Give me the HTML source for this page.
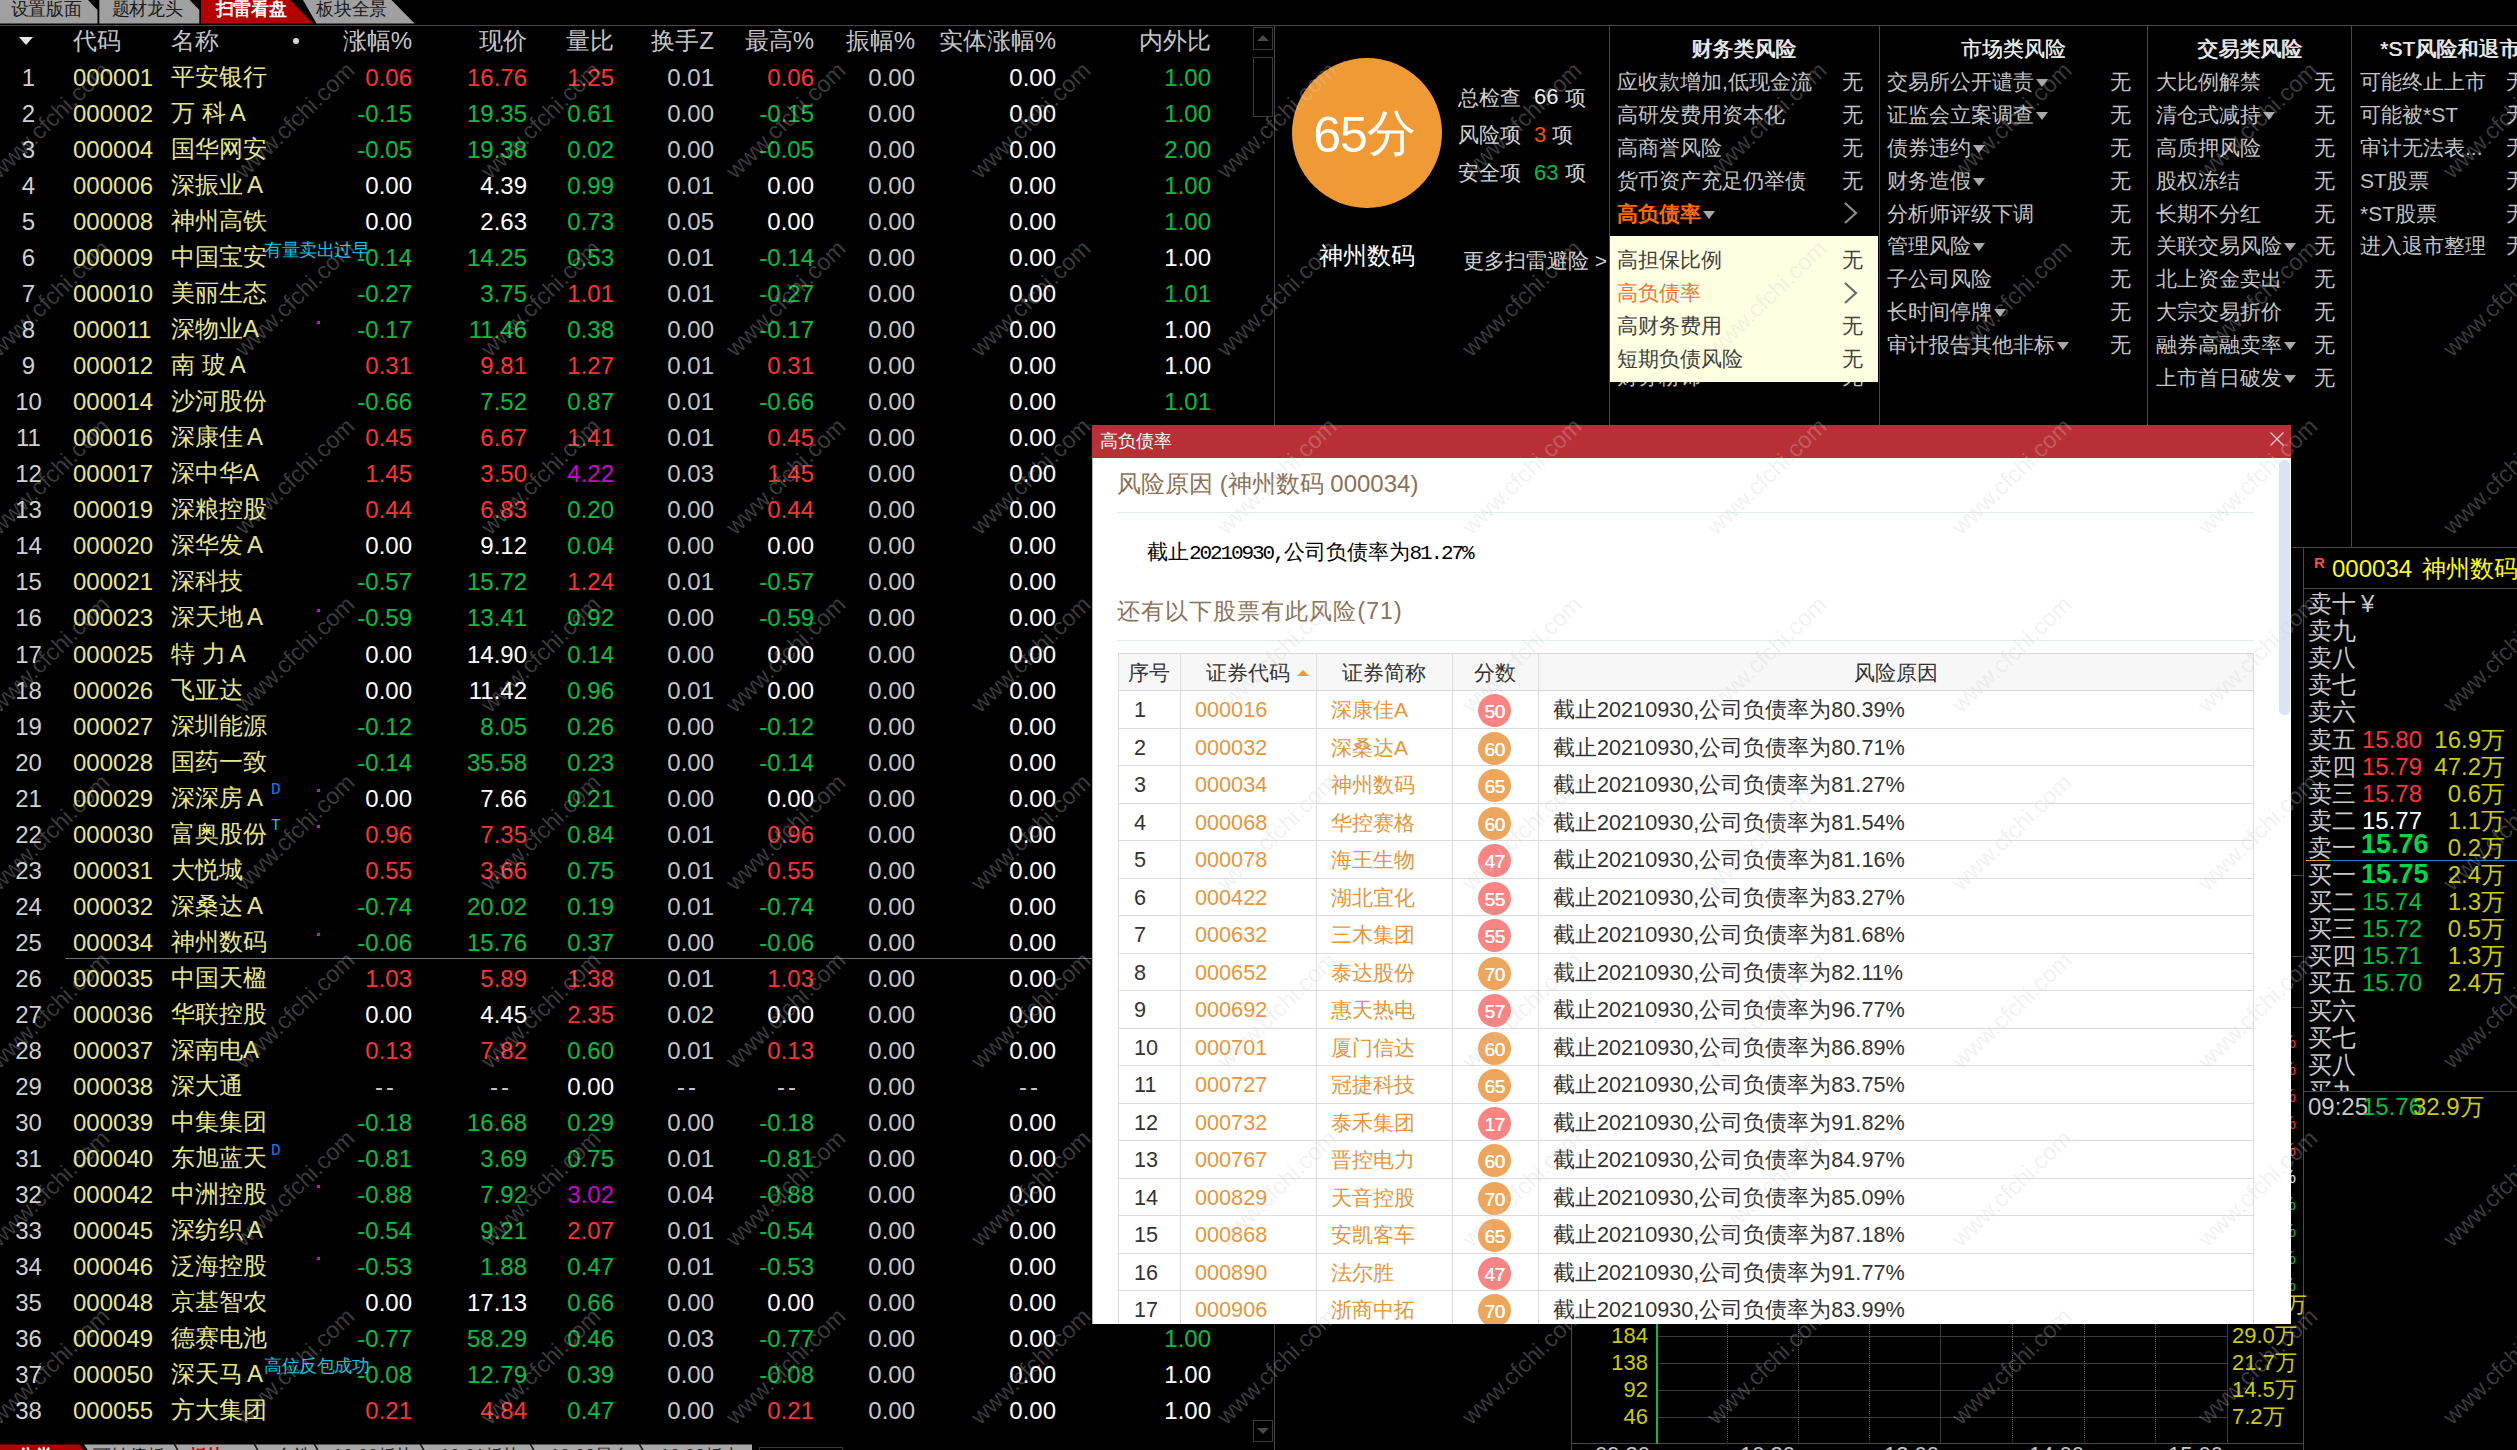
<!DOCTYPE html><html lang="zh"><head><meta charset="utf-8"><title>scan</title><style>
html,body{margin:0;padding:0;background:#000;}
body{width:2517px;height:1450px;overflow:hidden;position:relative;font-family:"Liberation Sans",sans-serif;}
.t{position:absolute;white-space:nowrap;}
.b{position:absolute;}
.row{position:absolute;left:0;width:1250px;height:30px;line-height:30px;font-size:24px;}
.row span{position:absolute;top:0;white-space:nowrap;}
.ix{left:0;width:57px;text-align:center;color:#d0d0d0;}
.cd{left:73px;color:#e6e68c;}
.nm{left:171px;color:#e6e68c;top:-1px !important;}
.c0{right:838px}.c1{right:723px}.c2{right:636px}.c3{right:536px}.c4{right:436px}.c5{right:335px}.c6{right:194px}.c7{right:39px}
.r{color:#ff3232}.g{color:#00c040}.w{color:#fff}.m{color:#d000d0}.x{color:#c8c8c8}
.dot{position:absolute;left:317px;top:5.5px;width:3px;height:3px;background:#e000e0;}
.rk{position:absolute;height:30px;line-height:30px;font-size:21px;color:#c4c4c4;white-space:nowrap;}
.rk i{display:inline-block;width:0;height:0;border-left:6px solid transparent;border-right:6px solid transparent;border-top:8px solid #a8a8a8;margin-left:2px;position:relative;top:-2px;}
.ob{position:absolute;left:2308px;width:209px;height:28px;line-height:28px;font-size:24px;color:#c8c8c8;white-space:nowrap;}
.ob span{position:absolute;top:0;}
.dr{position:absolute;left:1118px;width:1136px;height:37.5px;line-height:38px;font-size:21.65px;color:#333;box-sizing:border-box;border-bottom:1px solid #dcdcdc;}
.dr span{position:absolute;top:0;white-space:nowrap;}
.dr .o{color:#e8953a;}
.sc{position:absolute;left:360px;top:3px;width:33px;height:33px;border-radius:50%;color:#fff;font-size:19px;line-height:35px;text-align:center;letter-spacing:-0.5px;text-shadow:0.4px 0 0 #fff;}
.wm{position:absolute;white-space:nowrap;font-size:23.5px;color:rgba(210,210,210,0.285);transform-origin:0 100%;transform:rotate(-44deg);height:24px;line-height:24px;}
</style></head><body>
<svg class="b" style="left:0;top:0" width="420" height="24"><polygon points="0,0 88,0 97.5,10 97.5,23.6 0,23.6" fill="#a0a0a0"/></svg>
<svg class="b" style="left:0;top:0" width="420" height="24"><polygon points="99.3,0 189.7,0 199.3,10 199.3,23.6 99.3,23.6" fill="#a0a0a0"/></svg>
<svg class="b" style="left:0;top:0" width="420" height="24"><polygon points="303,0 391.6,0 414.6,23.6 316.5,23.6" fill="#a0a0a0"/></svg>
<svg class="b" style="left:0;top:0" width="420" height="24"><polygon points="201,0 290,0 313.3,23.6 201,23.6" fill="#b40000"/></svg>
<div class="t " style="top:-2.0px;height:22px;line-height:22px;color:#1a1a1a;font-size:18px;left:10.5px;letter-spacing:-0.2px;">设置版面</div>
<div class="t " style="top:-2.0px;height:22px;line-height:22px;color:#1a1a1a;font-size:18px;left:111.5px;letter-spacing:-0.2px;">题材龙头</div>
<div class="t " style="top:-2.0px;height:22px;line-height:22px;color:#ffffff;font-size:18px;left:215.5px;font-weight:bold;letter-spacing:-0.2px;">扫雷看盘</div>
<div class="t " style="top:-2.0px;height:22px;line-height:22px;color:#1a1a1a;font-size:18px;left:316px;letter-spacing:-0.2px;">板块全景</div>
<div class="b" style="left:0px;top:25px;width:2517px;height:1px;background:#484848;"></div>
<svg class="b" style="left:18px;top:36px" width="16" height="10"><path d="M1 1h14l-7 8z" fill="#e8e8e8"/></svg>
<div class="row" style="top:26px;color:#c4c4c4"><span style="left:73px">代码</span><span style="left:171px">名称</span><span class="c0">涨幅%</span><span class="c1">现价</span><span class="c2">量比</span><span class="c3">换手Z</span><span class="c4">最高%</span><span class="c5">振幅%</span><span class="c6">实体涨幅%</span><span class="c7">内外比</span></div>
<div class="b" style="left:292.5px;top:37.5px;width:6px;height:6px;background:#d8d8d8;border-radius:3px;"></div>
<div class="row" style="top:63.3px"><span class="ix">1</span><span class="cd">000001</span><span class="nm">平安银行</span><span class="c0 r">0.06</span><span class="c1 r">16.76</span><span class="c2 r">1.25</span><span class="c3 x">0.01</span><span class="c4 r">0.06</span><span class="c5 x">0.00</span><span class="c6 w">0.00</span><span class="c7 g">1.00</span></div>
<div class="row" style="top:99.3px"><span class="ix">2</span><span class="cd">000002</span><span class="nm">万&nbsp;科<span style="margin-left:4px">A</span></span><span class="c0 g">-0.15</span><span class="c1 g">19.35</span><span class="c2 g">0.61</span><span class="c3 x">0.00</span><span class="c4 g">-0.15</span><span class="c5 x">0.00</span><span class="c6 w">0.00</span><span class="c7 g">1.00</span></div>
<div class="row" style="top:135.3px"><span class="ix">3</span><span class="cd">000004</span><span class="nm">国华网安</span><span class="c0 g">-0.05</span><span class="c1 g">19.38</span><span class="c2 g">0.02</span><span class="c3 x">0.00</span><span class="c4 g">-0.05</span><span class="c5 x">0.00</span><span class="c6 w">0.00</span><span class="c7 g">2.00</span></div>
<div class="row" style="top:171.3px"><span class="ix">4</span><span class="cd">000006</span><span class="nm">深振业<span style="margin-left:4px">A</span></span><span class="c0 w">0.00</span><span class="c1 w">4.39</span><span class="c2 g">0.99</span><span class="c3 x">0.01</span><span class="c4 w">0.00</span><span class="c5 x">0.00</span><span class="c6 w">0.00</span><span class="c7 g">1.00</span></div>
<div class="row" style="top:207.3px"><span class="ix">5</span><span class="cd">000008</span><span class="nm">神州高铁</span><span class="c0 w">0.00</span><span class="c1 w">2.63</span><span class="c2 g">0.73</span><span class="c3 x">0.05</span><span class="c4 w">0.00</span><span class="c5 x">0.00</span><span class="c6 w">0.00</span><span class="c7 g">1.00</span></div>
<div class="row" style="top:243.3px"><span class="ix">6</span><span class="cd">000009</span><span class="nm">中国宝安</span><span class="c0 g">-0.14</span><span class="c1 g">14.25</span><span class="c2 g">0.53</span><span class="c3 x">0.01</span><span class="c4 g">-0.14</span><span class="c5 x">0.00</span><span class="c6 w">0.00</span><span class="c7 w">1.00</span></div>
<div class="row" style="top:279.4px"><span class="ix">7</span><span class="cd">000010</span><span class="nm">美丽生态</span><span class="c0 g">-0.27</span><span class="c1 g">3.75</span><span class="c2 r">1.01</span><span class="c3 x">0.01</span><span class="c4 g">-0.27</span><span class="c5 x">0.00</span><span class="c6 w">0.00</span><span class="c7 g">1.01</span></div>
<div class="row" style="top:315.4px"><span class="ix">8</span><span class="cd">000011</span><span class="nm">深物业A</span><span class="c0 g">-0.17</span><span class="c1 g">11.46</span><span class="c2 g">0.38</span><span class="c3 x">0.00</span><span class="c4 g">-0.17</span><span class="c5 x">0.00</span><span class="c6 w">0.00</span><span class="c7 w">1.00</span><div class="dot"></div></div>
<div class="row" style="top:351.4px"><span class="ix">9</span><span class="cd">000012</span><span class="nm">南&nbsp;玻<span style="margin-left:4px">A</span></span><span class="c0 r">0.31</span><span class="c1 r">9.81</span><span class="c2 r">1.27</span><span class="c3 x">0.01</span><span class="c4 r">0.31</span><span class="c5 x">0.00</span><span class="c6 w">0.00</span><span class="c7 w">1.00</span></div>
<div class="row" style="top:387.4px"><span class="ix">10</span><span class="cd">000014</span><span class="nm">沙河股份</span><span class="c0 g">-0.66</span><span class="c1 g">7.52</span><span class="c2 g">0.87</span><span class="c3 x">0.01</span><span class="c4 g">-0.66</span><span class="c5 x">0.00</span><span class="c6 w">0.00</span><span class="c7 g">1.01</span></div>
<div class="row" style="top:423.4px"><span class="ix">11</span><span class="cd">000016</span><span class="nm">深康佳<span style="margin-left:4px">A</span></span><span class="c0 r">0.45</span><span class="c1 r">6.67</span><span class="c2 r">1.41</span><span class="c3 x">0.01</span><span class="c4 r">0.45</span><span class="c5 x">0.00</span><span class="c6 w">0.00</span><span class="c7 w">1.00</span></div>
<div class="row" style="top:459.4px"><span class="ix">12</span><span class="cd">000017</span><span class="nm">深中华A</span><span class="c0 r">1.45</span><span class="c1 r">3.50</span><span class="c2 m">4.22</span><span class="c3 x">0.03</span><span class="c4 r">1.45</span><span class="c5 x">0.00</span><span class="c6 w">0.00</span><span class="c7 w">1.00</span></div>
<div class="row" style="top:495.4px"><span class="ix">13</span><span class="cd">000019</span><span class="nm">深粮控股</span><span class="c0 r">0.44</span><span class="c1 r">6.83</span><span class="c2 g">0.20</span><span class="c3 x">0.00</span><span class="c4 r">0.44</span><span class="c5 x">0.00</span><span class="c6 w">0.00</span><span class="c7 w">1.00</span></div>
<div class="row" style="top:531.4px"><span class="ix">14</span><span class="cd">000020</span><span class="nm">深华发<span style="margin-left:4px">A</span></span><span class="c0 w">0.00</span><span class="c1 w">9.12</span><span class="c2 g">0.04</span><span class="c3 x">0.00</span><span class="c4 w">0.00</span><span class="c5 x">0.00</span><span class="c6 w">0.00</span><span class="c7 w">1.00</span></div>
<div class="row" style="top:567.4px"><span class="ix">15</span><span class="cd">000021</span><span class="nm">深科技</span><span class="c0 g">-0.57</span><span class="c1 g">15.72</span><span class="c2 r">1.24</span><span class="c3 x">0.01</span><span class="c4 g">-0.57</span><span class="c5 x">0.00</span><span class="c6 w">0.00</span><span class="c7 w">1.00</span></div>
<div class="row" style="top:603.4px"><span class="ix">16</span><span class="cd">000023</span><span class="nm">深天地<span style="margin-left:4px">A</span></span><span class="c0 g">-0.59</span><span class="c1 g">13.41</span><span class="c2 g">0.92</span><span class="c3 x">0.00</span><span class="c4 g">-0.59</span><span class="c5 x">0.00</span><span class="c6 w">0.00</span><span class="c7 w">1.00</span><div class="dot"></div></div>
<div class="row" style="top:639.5px"><span class="ix">17</span><span class="cd">000025</span><span class="nm">特&nbsp;力<span style="margin-left:4px">A</span></span><span class="c0 w">0.00</span><span class="c1 w">14.90</span><span class="c2 g">0.14</span><span class="c3 x">0.00</span><span class="c4 w">0.00</span><span class="c5 x">0.00</span><span class="c6 w">0.00</span><span class="c7 w">1.00</span></div>
<div class="row" style="top:675.5px"><span class="ix">18</span><span class="cd">000026</span><span class="nm">飞亚达</span><span class="c0 w">0.00</span><span class="c1 w">11.42</span><span class="c2 g">0.96</span><span class="c3 x">0.01</span><span class="c4 w">0.00</span><span class="c5 x">0.00</span><span class="c6 w">0.00</span><span class="c7 w">1.00</span></div>
<div class="row" style="top:711.5px"><span class="ix">19</span><span class="cd">000027</span><span class="nm">深圳能源</span><span class="c0 g">-0.12</span><span class="c1 g">8.05</span><span class="c2 g">0.26</span><span class="c3 x">0.00</span><span class="c4 g">-0.12</span><span class="c5 x">0.00</span><span class="c6 w">0.00</span><span class="c7 w">1.00</span></div>
<div class="row" style="top:747.5px"><span class="ix">20</span><span class="cd">000028</span><span class="nm">国药一致</span><span class="c0 g">-0.14</span><span class="c1 g">35.58</span><span class="c2 g">0.23</span><span class="c3 x">0.00</span><span class="c4 g">-0.14</span><span class="c5 x">0.00</span><span class="c6 w">0.00</span><span class="c7 w">1.00</span></div>
<div class="row" style="top:783.5px"><span class="ix">21</span><span class="cd">000029</span><span class="nm">深深房<span style="margin-left:4px">A</span></span><span class="c0 w">0.00</span><span class="c1 w">7.66</span><span class="c2 g">0.21</span><span class="c3 x">0.00</span><span class="c4 w">0.00</span><span class="c5 x">0.00</span><span class="c6 w">0.00</span><span class="c7 w">1.00</span><div class="dot"></div></div>
<div class="row" style="top:819.5px"><span class="ix">22</span><span class="cd">000030</span><span class="nm">富奥股份</span><span class="c0 r">0.96</span><span class="c1 r">7.35</span><span class="c2 g">0.84</span><span class="c3 x">0.01</span><span class="c4 r">0.96</span><span class="c5 x">0.00</span><span class="c6 w">0.00</span><span class="c7 w">1.00</span><div class="dot"></div></div>
<div class="row" style="top:855.5px"><span class="ix">23</span><span class="cd">000031</span><span class="nm">大悦城</span><span class="c0 r">0.55</span><span class="c1 r">3.66</span><span class="c2 g">0.75</span><span class="c3 x">0.01</span><span class="c4 r">0.55</span><span class="c5 x">0.00</span><span class="c6 w">0.00</span><span class="c7 w">1.00</span></div>
<div class="row" style="top:891.5px"><span class="ix">24</span><span class="cd">000032</span><span class="nm">深桑达<span style="margin-left:4px">A</span></span><span class="c0 g">-0.74</span><span class="c1 g">20.02</span><span class="c2 g">0.19</span><span class="c3 x">0.01</span><span class="c4 g">-0.74</span><span class="c5 x">0.00</span><span class="c6 w">0.00</span><span class="c7 w">1.00</span></div>
<div class="row" style="top:927.5px"><span class="ix">25</span><span class="cd">000034</span><span class="nm">神州数码</span><span class="c0 g">-0.06</span><span class="c1 g">15.76</span><span class="c2 g">0.37</span><span class="c3 x">0.00</span><span class="c4 g">-0.06</span><span class="c5 x">0.00</span><span class="c6 w">0.00</span><span class="c7 w">1.00</span><div class="dot"></div></div>
<div class="row" style="top:963.5px"><span class="ix">26</span><span class="cd">000035</span><span class="nm">中国天楹</span><span class="c0 r">1.03</span><span class="c1 r">5.89</span><span class="c2 r">1.38</span><span class="c3 x">0.01</span><span class="c4 r">1.03</span><span class="c5 x">0.00</span><span class="c6 w">0.00</span><span class="c7 w">1.00</span></div>
<div class="row" style="top:999.6px"><span class="ix">27</span><span class="cd">000036</span><span class="nm">华联控股</span><span class="c0 w">0.00</span><span class="c1 w">4.45</span><span class="c2 r">2.35</span><span class="c3 x">0.02</span><span class="c4 w">0.00</span><span class="c5 x">0.00</span><span class="c6 w">0.00</span><span class="c7 w">1.00</span></div>
<div class="row" style="top:1035.6px"><span class="ix">28</span><span class="cd">000037</span><span class="nm">深南电A</span><span class="c0 r">0.13</span><span class="c1 r">7.82</span><span class="c2 g">0.60</span><span class="c3 x">0.01</span><span class="c4 r">0.13</span><span class="c5 x">0.00</span><span class="c6 w">0.00</span><span class="c7 w">1.00</span></div>
<div class="row" style="top:1071.6px"><span class="ix">29</span><span class="cd">000038</span><span class="nm">深大通</span><span class="c0 x" style="margin-right:15px;letter-spacing:3px">--</span><span class="c1 x" style="margin-right:15px;letter-spacing:3px">--</span><span class="c2 w">0.00</span><span class="c3 x" style="margin-right:15px;letter-spacing:3px">--</span><span class="c4 x" style="margin-right:15px;letter-spacing:3px">--</span><span class="c5 x">0.00</span><span class="c6 x" style="margin-right:15px;letter-spacing:3px">--</span></div>
<div class="row" style="top:1107.6px"><span class="ix">30</span><span class="cd">000039</span><span class="nm">中集集团</span><span class="c0 g">-0.18</span><span class="c1 g">16.68</span><span class="c2 g">0.29</span><span class="c3 x">0.00</span><span class="c4 g">-0.18</span><span class="c5 x">0.00</span><span class="c6 w">0.00</span><span class="c7 w">1.00</span></div>
<div class="row" style="top:1143.6px"><span class="ix">31</span><span class="cd">000040</span><span class="nm">东旭蓝天</span><span class="c0 g">-0.81</span><span class="c1 g">3.69</span><span class="c2 g">0.75</span><span class="c3 x">0.01</span><span class="c4 g">-0.81</span><span class="c5 x">0.00</span><span class="c6 w">0.00</span><span class="c7 w">1.00</span></div>
<div class="row" style="top:1179.6px"><span class="ix">32</span><span class="cd">000042</span><span class="nm">中洲控股</span><span class="c0 g">-0.88</span><span class="c1 g">7.92</span><span class="c2 m">3.02</span><span class="c3 x">0.04</span><span class="c4 g">-0.88</span><span class="c5 x">0.00</span><span class="c6 w">0.00</span><span class="c7 w">1.00</span><div class="dot"></div></div>
<div class="row" style="top:1215.6px"><span class="ix">33</span><span class="cd">000045</span><span class="nm">深纺织<span style="margin-left:4px">A</span></span><span class="c0 g">-0.54</span><span class="c1 g">9.21</span><span class="c2 r">2.07</span><span class="c3 x">0.01</span><span class="c4 g">-0.54</span><span class="c5 x">0.00</span><span class="c6 w">0.00</span><span class="c7 w">1.00</span></div>
<div class="row" style="top:1251.6px"><span class="ix">34</span><span class="cd">000046</span><span class="nm">泛海控股</span><span class="c0 g">-0.53</span><span class="c1 g">1.88</span><span class="c2 g">0.47</span><span class="c3 x">0.01</span><span class="c4 g">-0.53</span><span class="c5 x">0.00</span><span class="c6 w">0.00</span><span class="c7 w">1.00</span><div class="dot"></div></div>
<div class="row" style="top:1287.6px"><span class="ix">35</span><span class="cd">000048</span><span class="nm">京基智农</span><span class="c0 w">0.00</span><span class="c1 w">17.13</span><span class="c2 g">0.66</span><span class="c3 x">0.00</span><span class="c4 w">0.00</span><span class="c5 x">0.00</span><span class="c6 w">0.00</span><span class="c7 w">1.00</span></div>
<div class="row" style="top:1323.6px"><span class="ix">36</span><span class="cd">000049</span><span class="nm">德赛电池</span><span class="c0 g">-0.77</span><span class="c1 g">58.29</span><span class="c2 g">0.46</span><span class="c3 x">0.03</span><span class="c4 g">-0.77</span><span class="c5 x">0.00</span><span class="c6 w">0.00</span><span class="c7 g">1.00</span></div>
<div class="row" style="top:1359.7px"><span class="ix">37</span><span class="cd">000050</span><span class="nm">深天马<span style="margin-left:4px">A</span></span><span class="c0 g">-0.08</span><span class="c1 g">12.79</span><span class="c2 g">0.39</span><span class="c3 x">0.00</span><span class="c4 g">-0.08</span><span class="c5 x">0.00</span><span class="c6 w">0.00</span><span class="c7 w">1.00</span></div>
<div class="row" style="top:1395.7px"><span class="ix">38</span><span class="cd">000055</span><span class="nm">方大集团</span><span class="c0 r">0.21</span><span class="c1 r">4.84</span><span class="c2 g">0.47</span><span class="c3 x">0.00</span><span class="c4 r">0.21</span><span class="c5 x">0.00</span><span class="c6 w">0.00</span><span class="c7 w">1.00</span></div>
<div class="t " style="top:782.0px;height:16px;line-height:16px;color:#0080ff;font-size:16px;left:271px;font-family:'Liberation Mono',monospace;">D</div>
<div class="t " style="top:818.0px;height:16px;line-height:16px;color:#00c8e0;font-size:16px;left:271px;font-family:'Liberation Mono',monospace;">T</div>
<div class="t " style="top:1143.0px;height:16px;line-height:16px;color:#0080ff;font-size:16px;left:271px;font-family:'Liberation Mono',monospace;">D</div>
<div class="t " style="top:239.5px;height:20px;line-height:20px;color:#00c8e8;font-size:18px;left:264px;letter-spacing:-0.4px;">有量卖出过早</div>
<div class="t " style="top:1356.0px;height:20px;line-height:20px;color:#00c8e8;font-size:18px;left:264px;letter-spacing:-0.4px;">高位反包成功</div>
<div class="b" style="left:65px;top:958px;width:1210px;height:1px;background:#707070;"></div>
<div class="b" style="left:1253px;top:27px;width:18px;height:21px;border:1px solid #3a3a3a;"></div>
<svg class="b" style="left:1257px;top:34px" width="12" height="8"><path d="M0 7h12l-6-6z" fill="#4a4a4a"/></svg>
<div class="b" style="left:1253px;top:57px;width:18px;height:58px;border:1px solid #3a3a3a;"></div>
<div class="b" style="left:1253px;top:1420px;width:18px;height:20px;border:1px solid #3a3a3a;"></div>
<svg class="b" style="left:1257px;top:1427px" width="12" height="8"><path d="M0 1h12l-6 6z" fill="#4a4a4a"/></svg>
<div class="b" style="left:1274px;top:25px;width:1px;height:1425px;background:#484848;"></div>
<div class="b" style="left:1609px;top:25px;width:1px;height:400px;background:#484848;"></div>
<div class="b" style="left:1879px;top:25px;width:1px;height:400px;background:#484848;"></div>
<div class="b" style="left:2147px;top:25px;width:1px;height:400px;background:#484848;"></div>
<div class="b" style="left:2351px;top:25px;width:1px;height:523px;background:#484848;"></div>
<div class="b" style="left:1292px;top:58px;width:150px;height:150px;border-radius:50%;background:#f09a35;"></div>
<div class="t" style="left:1289px;top:102px;width:150px;height:66px;line-height:66px;text-align:center;color:#fff;font-size:50px;letter-spacing:-1px;">65<span style="font-size:49px;position:relative;top:-2px">分</span></div>
<div class="t " style="top:241.0px;height:30px;line-height:30px;color:#ffffff;font-size:24px;left:1167px;width:400px;text-align:center;">神州数码</div>
<div class="t " style="top:84.0px;height:28px;line-height:28px;color:#d0d0d0;font-size:21px;left:1458px;">总检查</div>
<div class="t " style="top:83.0px;height:28px;line-height:28px;color:#f0f0f0;font-size:22px;left:1534px;">66</div>
<div class="t " style="top:84.0px;height:28px;line-height:28px;color:#d0d0d0;font-size:21px;left:1565px;">项</div>
<div class="t " style="top:121.0px;height:28px;line-height:28px;color:#d0d0d0;font-size:21px;left:1458px;">风险项</div>
<div class="t " style="top:121.0px;height:28px;line-height:28px;color:#ff4a00;font-size:22px;left:1534px;">3</div>
<div class="t " style="top:121.0px;height:28px;line-height:28px;color:#d0d0d0;font-size:21px;left:1552px;">项</div>
<div class="t " style="top:159.0px;height:28px;line-height:28px;color:#d0d0d0;font-size:21px;left:1458px;">安全项</div>
<div class="t " style="top:159.0px;height:28px;line-height:28px;color:#00c040;font-size:22px;left:1534px;">63</div>
<div class="t " style="top:159.0px;height:28px;line-height:28px;color:#d0d0d0;font-size:21px;left:1565px;">项</div>
<div class="t " style="top:247.0px;height:28px;line-height:28px;color:#d0d0d0;font-size:21px;left:1463px;">更多扫雷避险 &gt;</div>
<div class="t " style="top:34.0px;height:30px;line-height:30px;color:#e8e8e8;font-size:21px;left:1543.5px;width:400px;text-align:center;text-shadow:0.5px 0 0 #e8e8e8;">财务类风险</div>
<div class="t " style="top:34.0px;height:30px;line-height:30px;color:#e8e8e8;font-size:21px;left:1813px;width:400px;text-align:center;text-shadow:0.5px 0 0 #e8e8e8;">市场类风险</div>
<div class="t " style="top:34.0px;height:30px;line-height:30px;color:#e8e8e8;font-size:21px;left:2049.5px;width:400px;text-align:center;text-shadow:0.5px 0 0 #e8e8e8;">交易类风险</div>
<div class="t " style="top:34.0px;height:30px;line-height:30px;color:#e8e8e8;font-size:21px;left:2380px;text-shadow:0.5px 0 0 #e8e8e8;">*ST风险和退市风险</div>
<div class="rk" style="left:1617px;top:67.2px;color:#c4c4c4;">应收款增加,低现金流</div>
<div class="rk" style="left:1842px;top:67.2px;color:#c4c4c4;">无</div>
<div class="rk" style="left:1617px;top:100.1px;color:#c4c4c4;">高研发费用资本化</div>
<div class="rk" style="left:1842px;top:100.1px;color:#c4c4c4;">无</div>
<div class="rk" style="left:1617px;top:132.9px;color:#c4c4c4;">高商誉风险</div>
<div class="rk" style="left:1842px;top:132.9px;color:#c4c4c4;">无</div>
<div class="rk" style="left:1617px;top:165.8px;color:#c4c4c4;">货币资产充足仍举债</div>
<div class="rk" style="left:1842px;top:165.8px;color:#c4c4c4;">无</div>
<div class="rk" style="left:1617px;top:198.6px;color:#ff6a00;font-weight:bold;">高负债率<i></i></div>
<svg class="b" style="left:1843px;top:202.10000000000002px" width="16" height="22"><path d="M2 1l11 10l-11 10" fill="none" stroke="#909090" stroke-width="2.1"/></svg>
<div class="rk" style="left:1617px;top:362.4px;color:#c4c4c4;">财务粉饰</div>
<div class="rk" style="left:1842px;top:362.4px;color:#c4c4c4;">无</div>
<div class="rk" style="left:1887px;top:67.2px;color:#c4c4c4;">交易所公开谴责<i></i></div>
<div class="rk" style="left:2110px;top:67.2px;color:#c4c4c4;">无</div>
<div class="rk" style="left:1887px;top:100.1px;color:#c4c4c4;">证监会立案调查<i></i></div>
<div class="rk" style="left:2110px;top:100.1px;color:#c4c4c4;">无</div>
<div class="rk" style="left:1887px;top:132.9px;color:#c4c4c4;">债券违约<i></i></div>
<div class="rk" style="left:2110px;top:132.9px;color:#c4c4c4;">无</div>
<div class="rk" style="left:1887px;top:165.8px;color:#c4c4c4;">财务造假<i></i></div>
<div class="rk" style="left:2110px;top:165.8px;color:#c4c4c4;">无</div>
<div class="rk" style="left:1887px;top:198.6px;color:#c4c4c4;">分析师评级下调</div>
<div class="rk" style="left:2110px;top:198.6px;color:#c4c4c4;">无</div>
<div class="rk" style="left:1887px;top:231.4px;color:#c4c4c4;">管理风险<i></i></div>
<div class="rk" style="left:2110px;top:231.4px;color:#c4c4c4;">无</div>
<div class="rk" style="left:1887px;top:264.3px;color:#c4c4c4;">子公司风险</div>
<div class="rk" style="left:2110px;top:264.3px;color:#c4c4c4;">无</div>
<div class="rk" style="left:1887px;top:297.2px;color:#c4c4c4;">长时间停牌<i></i></div>
<div class="rk" style="left:2110px;top:297.2px;color:#c4c4c4;">无</div>
<div class="rk" style="left:1887px;top:330.0px;color:#c4c4c4;">审计报告其他非标<i></i></div>
<div class="rk" style="left:2110px;top:330.0px;color:#c4c4c4;">无</div>
<div class="rk" style="left:2156px;top:67.2px;color:#c4c4c4;">大比例解禁</div>
<div class="rk" style="left:2314px;top:67.2px;color:#c4c4c4;">无</div>
<div class="rk" style="left:2156px;top:100.1px;color:#c4c4c4;">清仓式减持<i></i></div>
<div class="rk" style="left:2314px;top:100.1px;color:#c4c4c4;">无</div>
<div class="rk" style="left:2156px;top:132.9px;color:#c4c4c4;">高质押风险</div>
<div class="rk" style="left:2314px;top:132.9px;color:#c4c4c4;">无</div>
<div class="rk" style="left:2156px;top:165.8px;color:#c4c4c4;">股权冻结</div>
<div class="rk" style="left:2314px;top:165.8px;color:#c4c4c4;">无</div>
<div class="rk" style="left:2156px;top:198.6px;color:#c4c4c4;">长期不分红</div>
<div class="rk" style="left:2314px;top:198.6px;color:#c4c4c4;">无</div>
<div class="rk" style="left:2156px;top:231.4px;color:#c4c4c4;">关联交易风险<i></i></div>
<div class="rk" style="left:2314px;top:231.4px;color:#c4c4c4;">无</div>
<div class="rk" style="left:2156px;top:264.3px;color:#c4c4c4;">北上资金卖出</div>
<div class="rk" style="left:2314px;top:264.3px;color:#c4c4c4;">无</div>
<div class="rk" style="left:2156px;top:297.2px;color:#c4c4c4;">大宗交易折价</div>
<div class="rk" style="left:2314px;top:297.2px;color:#c4c4c4;">无</div>
<div class="rk" style="left:2156px;top:330.0px;color:#c4c4c4;">融券高融卖率<i></i></div>
<div class="rk" style="left:2314px;top:330.0px;color:#c4c4c4;">无</div>
<div class="rk" style="left:2156px;top:362.9px;color:#c4c4c4;">上市首日破发<i></i></div>
<div class="rk" style="left:2314px;top:362.9px;color:#c4c4c4;">无</div>
<div class="rk" style="left:2360px;top:67.2px;color:#c4c4c4;">可能终止上市</div>
<div class="rk" style="left:2506px;top:67.2px;color:#c4c4c4;">无</div>
<div class="rk" style="left:2360px;top:100.1px;color:#c4c4c4;">可能被*ST</div>
<div class="rk" style="left:2506px;top:100.1px;color:#c4c4c4;">无</div>
<div class="rk" style="left:2360px;top:132.9px;color:#c4c4c4;">审计无法表...</div>
<div class="rk" style="left:2506px;top:132.9px;color:#c4c4c4;">无</div>
<div class="rk" style="left:2360px;top:165.8px;color:#c4c4c4;">ST股票</div>
<div class="rk" style="left:2506px;top:165.8px;color:#c4c4c4;">无</div>
<div class="rk" style="left:2360px;top:198.6px;color:#c4c4c4;">*ST股票</div>
<div class="rk" style="left:2506px;top:198.6px;color:#c4c4c4;">无</div>
<div class="rk" style="left:2360px;top:231.4px;color:#c4c4c4;">进入退市整理</div>
<div class="rk" style="left:2506px;top:231.4px;color:#c4c4c4;">无</div>
<div class="b" style="left:1610px;top:236px;width:268px;height:146px;background:#ffffe1;"></div>
<div class="rk" style="left:1617px;top:245.0px;color:#404040;">高担保比例</div>
<div class="rk" style="left:1842px;top:245.0px;color:#404040;">无</div>
<div class="rk" style="left:1617px;top:278.0px;color:#ff7030;">高负债率</div>
<svg class="b" style="left:1843px;top:282.0px" width="16" height="22"><path d="M2 1l11 10l-11 10" fill="none" stroke="#686868" stroke-width="2.1"/></svg>
<div class="rk" style="left:1617px;top:311.0px;color:#404040;">高财务费用</div>
<div class="rk" style="left:1842px;top:311.0px;color:#404040;">无</div>
<div class="rk" style="left:1617px;top:344.0px;color:#404040;">短期负债风险</div>
<div class="rk" style="left:1842px;top:344.0px;color:#404040;">无</div>
<div class="b" style="left:2292px;top:547px;width:225px;height:1px;background:#484848;"></div>
<div class="b" style="left:2303px;top:548px;width:1px;height:902px;background:#484848;"></div>
<div class="b" style="left:2303px;top:588px;width:214px;height:1px;background:#484848;"></div>
<div class="t " style="top:554.5px;height:16px;line-height:16px;color:#ff4848;font-size:15px;left:2314px;font-weight:bold;">R</div>
<div class="t " style="top:553.0px;height:32px;line-height:32px;color:#ffff00;font-size:24px;left:2332px;word-spacing:3px;">000034 神州数码</div>
<div class="b" style="left:0;top:0;width:2517px;height:1091px;overflow:hidden;">
<div class="ob" style="top:590.0px"><span style="left:0">卖十</span><span style="left:53px;color:#c8c8c8">¥</span></div>
<div class="ob" style="top:617.1px"><span style="left:0">卖九</span></div>
<div class="ob" style="top:644.2px"><span style="left:0">卖八</span></div>
<div class="ob" style="top:671.3px"><span style="left:0">卖七</span></div>
<div class="ob" style="top:698.4px"><span style="left:0">卖六</span></div>
<div class="ob" style="top:725.5px"><span style="left:0">卖五</span><span style="left:54px" class="r">15.80</span><span style="right:12px;color:#cccc00">16.9万</span></div>
<div class="ob" style="top:752.6px"><span style="left:0">卖四</span><span style="left:54px" class="r">15.79</span><span style="right:12px;color:#cccc00">47.2万</span></div>
<div class="ob" style="top:779.7px"><span style="left:0">卖三</span><span style="left:54px" class="r">15.78</span><span style="right:12px;color:#cccc00">0.6万</span></div>
<div class="ob" style="top:806.8px"><span style="left:0">卖二</span><span style="left:54px" class="w">15.77</span><span style="right:12px;color:#cccc00">1.1万</span></div>
<div class="ob" style="top:833.9px"><span style="left:0">卖一</span><span style="left:53px;color:#00d848;font-weight:bold;font-size:27px;top:-4px">15.76</span><span style="right:12px;color:#cccc00">0.2万</span></div>
<div class="ob" style="top:861.0px"><span style="left:0">买一</span><span style="left:53px;color:#00d848;font-weight:bold;font-size:27px;top:-1px">15.75</span><span style="right:12px;color:#cccc00">2.4万</span></div>
<div class="ob" style="top:888.1px"><span style="left:0">买二</span><span style="left:54px" class="g">15.74</span><span style="right:12px;color:#cccc00">1.3万</span></div>
<div class="ob" style="top:915.2px"><span style="left:0">买三</span><span style="left:54px" class="g">15.72</span><span style="right:12px;color:#cccc00">0.5万</span></div>
<div class="ob" style="top:942.3px"><span style="left:0">买四</span><span style="left:54px" class="g">15.71</span><span style="right:12px;color:#cccc00">1.3万</span></div>
<div class="ob" style="top:969.4px"><span style="left:0">买五</span><span style="left:54px" class="g">15.70</span><span style="right:12px;color:#cccc00">2.4万</span></div>
<div class="ob" style="top:996.5px"><span style="left:0">买六</span></div>
<div class="ob" style="top:1023.6px"><span style="left:0">买七</span></div>
<div class="ob" style="top:1050.7px"><span style="left:0">买八</span></div>
<div class="ob" style="top:1077.8px"><span style="left:0">买九</span></div>
</div>
<div class="b" style="left:2306px;top:860px;width:24px;height:1px;background:#e0a020;"></div>
<div class="b" style="left:2330px;top:860px;width:187px;height:1px;background:#2878d0;"></div>
<div class="b" style="left:2303px;top:1091px;width:214px;height:1px;background:#484848;"></div>
<div class="ob" style="top:1093px"><span style="left:0">09:25</span><span style="left:54px" class="g">15.76</span><span style="left:105px;color:#cccc00">32.9万</span></div>
<div class="b" style="left:2292px;top:875px;width:12px;height:1px;background:#484848;"></div>
<div class="b" style="left:2292px;top:956px;width:12px;height:1px;background:#484848;"></div>
<div class="b" style="left:2292px;top:1007px;width:12px;height:1px;background:#484848;"></div>
<div class="t " style="top:1031.5px;height:20px;line-height:20px;color:#ff3232;font-size:18px;left:2280px;">%</div>
<div class="t " style="top:1058.5px;height:20px;line-height:20px;color:#ff3232;font-size:18px;left:2280px;">%</div>
<div class="t " style="top:1085.5px;height:20px;line-height:20px;color:#ff3232;font-size:18px;left:2280px;">%</div>
<div class="t " style="top:1112.5px;height:20px;line-height:20px;color:#ff3232;font-size:18px;left:2280px;">%</div>
<div class="t " style="top:1139.5px;height:20px;line-height:20px;color:#ff3232;font-size:18px;left:2280px;">%</div>
<div class="t " style="top:1166.5px;height:20px;line-height:20px;color:#e0e0e0;font-size:18px;left:2280px;">%</div>
<div class="t " style="top:1193.5px;height:20px;line-height:20px;color:#00c040;font-size:18px;left:2280px;">%</div>
<div class="t " style="top:1220.5px;height:20px;line-height:20px;color:#00c040;font-size:18px;left:2280px;">%</div>
<div class="t " style="top:1247.5px;height:20px;line-height:20px;color:#00c040;font-size:18px;left:2280px;">%</div>
<div class="t " style="top:1274.5px;height:20px;line-height:20px;color:#00c040;font-size:18px;left:2280px;">%</div>
<div class="t " style="top:1293.0px;height:24px;line-height:24px;color:#cccc00;font-size:22px;left:2285px;">万</div>
<div class="b" style="left:1571px;top:1324px;width:1px;height:126px;background:#484848;"></div>
<div class="b" style="left:1571px;top:1443px;width:733px;height:1px;background:#484848;"></div>
<div class="b" style="left:1656px;top:1336px;width:571px;height:1px;background:#3c3c3c;"></div>
<div class="b" style="left:1656px;top:1363px;width:571px;height:1px;background:#3c3c3c;"></div>
<div class="b" style="left:1656px;top:1390px;width:571px;height:1px;background:#3c3c3c;"></div>
<div class="b" style="left:1656px;top:1417px;width:571px;height:1px;background:#3c3c3c;"></div>
<div class="b" style="left:1656px;top:1324px;width:2px;height:120px;background:#00c040;"></div>
<div class="b" style="left:1940px;top:1324px;width:1px;height:120px;background:#3c3c3c;"></div>
<div class="b" style="left:2227px;top:1324px;width:1px;height:120px;background:#3c3c3c;"></div>
<div class="b" style="left:1727px;top:1324px;width:0;height:120px;border-left:1px dotted #555;"></div>
<div class="b" style="left:1798px;top:1324px;width:0;height:120px;border-left:1px dotted #555;"></div>
<div class="b" style="left:1869px;top:1324px;width:0;height:120px;border-left:1px dotted #555;"></div>
<div class="b" style="left:2012px;top:1324px;width:0;height:120px;border-left:1px dotted #555;"></div>
<div class="b" style="left:2084px;top:1324px;width:0;height:120px;border-left:1px dotted #555;"></div>
<div class="b" style="left:2155px;top:1324px;width:0;height:120px;border-left:1px dotted #555;"></div>
<div class="t " style="top:1323.0px;height:26px;line-height:26px;color:#cccc00;font-size:22px;right:869px;text-align:right;">184</div>
<div class="t " style="top:1323.0px;height:26px;line-height:26px;color:#cccc00;font-size:22px;left:2232px;">29.0万</div>
<div class="t " style="top:1350.0px;height:26px;line-height:26px;color:#cccc00;font-size:22px;right:869px;text-align:right;">138</div>
<div class="t " style="top:1350.0px;height:26px;line-height:26px;color:#cccc00;font-size:22px;left:2232px;">21.7万</div>
<div class="t " style="top:1377.0px;height:26px;line-height:26px;color:#cccc00;font-size:22px;right:869px;text-align:right;">92</div>
<div class="t " style="top:1377.0px;height:26px;line-height:26px;color:#cccc00;font-size:22px;left:2232px;">14.5万</div>
<div class="t " style="top:1404.0px;height:26px;line-height:26px;color:#cccc00;font-size:22px;right:869px;text-align:right;">46</div>
<div class="t " style="top:1404.0px;height:26px;line-height:26px;color:#cccc00;font-size:22px;left:2232px;">7.2万</div>
<div class="t " style="top:1442.0px;height:26px;line-height:26px;color:#c8c8c8;font-size:22px;left:1595px;">09:30</div>
<div class="t " style="top:1442.0px;height:26px;line-height:26px;color:#c8c8c8;font-size:22px;left:1740px;">10:30</div>
<div class="t " style="top:1442.0px;height:26px;line-height:26px;color:#c8c8c8;font-size:22px;left:1884px;">13:00</div>
<div class="t " style="top:1442.0px;height:26px;line-height:26px;color:#c8c8c8;font-size:22px;left:2029px;">14:00</div>
<div class="t " style="top:1442.0px;height:26px;line-height:26px;color:#c8c8c8;font-size:22px;left:2168px;">15:00</div>
<div class="b" style="left:0px;top:1444.4px;width:84px;height:6px;background:#b40000;clip-path:polygon(0 0,79px 0,84px 100%,0 100%);"></div>
<div class="b" style="left:84px;top:1444.4px;width:668px;height:6px;background:#a8a8a8;clip-path:polygon(0 0,100% 0,100% 100%,4px 100%);"></div>
<div class="b" style="left:175px;top:1444px;width:1.5px;height:6px;background:#202020;transform:skewX(30deg);"></div>
<div class="b" style="left:255px;top:1444px;width:1.5px;height:6px;background:#202020;transform:skewX(30deg);"></div>
<div class="b" style="left:315px;top:1444px;width:1.5px;height:6px;background:#202020;transform:skewX(30deg);"></div>
<div class="b" style="left:421px;top:1444px;width:1.5px;height:6px;background:#202020;transform:skewX(30deg);"></div>
<div class="b" style="left:531px;top:1444px;width:1.5px;height:6px;background:#202020;transform:skewX(30deg);"></div>
<div class="b" style="left:640px;top:1444px;width:1.5px;height:6px;background:#202020;transform:skewX(30deg);"></div>
<div class="b" style="left:759px;top:1447px;width:82px;height:6px;border:1px solid #383838;"></div>
<div class="t " style="top:1444.5px;height:22px;line-height:22px;color:#fff;font-size:18px;left:17px;font-weight:bold;">分类</div>
<div class="t " style="top:1444.5px;height:22px;line-height:22px;color:#1a1a1a;font-size:18px;left:93px;font-weight:normal;">可转债板</div>
<div class="t " style="top:1444.5px;height:22px;line-height:22px;color:#d00000;font-size:18px;left:189px;font-weight:bold;">板块▲</div>
<div class="t " style="top:1444.5px;height:22px;line-height:22px;color:#1a1a1a;font-size:18px;left:276px;font-weight:normal;">自选</div>
<div class="t " style="top:1444.5px;height:22px;line-height:22px;color:#1a1a1a;font-size:18px;left:333px;font-weight:normal;">10.00板块</div>
<div class="t " style="top:1444.5px;height:22px;line-height:22px;color:#1a1a1a;font-size:18px;left:440px;font-weight:normal;">10.01板块</div>
<div class="t " style="top:1444.5px;height:22px;line-height:22px;color:#1a1a1a;font-size:18px;left:550px;font-weight:normal;">10.02最自</div>
<div class="t " style="top:1444.5px;height:22px;line-height:22px;color:#1a1a1a;font-size:18px;left:660px;font-weight:normal;">10.03板中</div>
<div class="b" style="left:1092px;top:425px;width:1199px;height:899px;background:#fff;overflow:hidden;">
<div class="b" style="left:0;top:0;width:1199px;height:33px;background:#b83035;"></div>
<div class="t" style="left:8px;top:4px;height:24px;line-height:24px;color:#fff;font-size:18px;">高负债率</div>
<svg class="b" style="left:1178px;top:7px" width="14" height="14"><path d="M.5 .5l13 13M13.5 .5l-13 13" stroke="#f0d0d0" stroke-width="1.3" fill="none"/></svg>
</div>
<div class="t " style="top:467.0px;height:34px;line-height:34px;color:#8a7258;font-size:24px;left:1117px;">风险原因 (神州数码 000034)</div>
<div class="b" style="left:1117px;top:512px;width:1137px;height:1px;background:#e3ebee;"></div>
<div class="t " style="top:538.0px;height:28px;line-height:28px;color:#000;font-size:21px;left:1147px;">截止<span style="font-family:'Liberation Mono',monospace;letter-spacing:-2.1px">20210930,</span>公司负债率为<span style="font-family:'Liberation Mono',monospace;letter-spacing:-2.1px">81.27%</span></div>
<div class="t " style="top:594.0px;height:34px;line-height:34px;color:#8a7258;font-size:23px;left:1117px;letter-spacing:1.05px;">还有以下股票有此风险(71)</div>
<div class="b" style="left:1117px;top:640px;width:1137px;height:1px;background:#e3ebee;"></div>
<div class="b" style="left:1092px;top:425px;width:1199px;height:899px;overflow:hidden;"><div class="b" style="left:-1092px;top:-425px;width:2517px;height:1450px;">
<div class="b" style="left:1118px;top:653px;width:1136px;height:38px;background:#f7f7f7;border:1px solid #d8d8d8;box-sizing:border-box;"></div>
<div class="t " style="top:658.0px;height:30px;line-height:30px;color:#333;font-size:21px;left:949px;width:400px;text-align:center;">序号</div>
<div class="t " style="top:658.0px;height:30px;line-height:30px;color:#333;font-size:21px;left:1048px;width:400px;text-align:center;">证券代码</div>
<div class="t " style="top:658.0px;height:30px;line-height:30px;color:#333;font-size:21px;left:1184px;width:400px;text-align:center;">证券简称</div>
<div class="t " style="top:658.0px;height:30px;line-height:30px;color:#333;font-size:21px;left:1295px;width:400px;text-align:center;">分数</div>
<div class="t " style="top:658.0px;height:30px;line-height:30px;color:#333;font-size:21px;left:1696px;width:400px;text-align:center;">风险原因</div>
<svg class="b" style="left:1297px;top:669px" width="12" height="7"><path d="M0 7h12l-6-6z" fill="#ff9a20"/></svg>
<div class="dr" style="top:691.0px"><span style="left:16px">1</span><span class="o" style="left:77px">000016</span><span class="o" style="left:213px;font-size:21px">深康佳A</span><div class="sc" style="background:#fa8484">50</div><span style="left:435px">截止20210930,公司负债率为80.39%</span></div>
<div class="dr" style="top:728.5px"><span style="left:16px">2</span><span class="o" style="left:77px">000032</span><span class="o" style="left:213px;font-size:21px">深桑达A</span><div class="sc" style="background:#eea55c">60</div><span style="left:435px">截止20210930,公司负债率为80.71%</span></div>
<div class="dr" style="top:766.0px"><span style="left:16px">3</span><span class="o" style="left:77px">000034</span><span class="o" style="left:213px;font-size:21px">神州数码</span><div class="sc" style="background:#eea55c">65</div><span style="left:435px">截止20210930,公司负债率为81.27%</span></div>
<div class="dr" style="top:803.5px"><span style="left:16px">4</span><span class="o" style="left:77px">000068</span><span class="o" style="left:213px;font-size:21px">华控赛格</span><div class="sc" style="background:#eea55c">60</div><span style="left:435px">截止20210930,公司负债率为81.54%</span></div>
<div class="dr" style="top:841.0px"><span style="left:16px">5</span><span class="o" style="left:77px">000078</span><span class="o" style="left:213px;font-size:21px">海王生物</span><div class="sc" style="background:#fa8484">47</div><span style="left:435px">截止20210930,公司负债率为81.16%</span></div>
<div class="dr" style="top:878.5px"><span style="left:16px">6</span><span class="o" style="left:77px">000422</span><span class="o" style="left:213px;font-size:21px">湖北宜化</span><div class="sc" style="background:#fa8484">55</div><span style="left:435px">截止20210930,公司负债率为83.27%</span></div>
<div class="dr" style="top:916.0px"><span style="left:16px">7</span><span class="o" style="left:77px">000632</span><span class="o" style="left:213px;font-size:21px">三木集团</span><div class="sc" style="background:#fa8484">55</div><span style="left:435px">截止20210930,公司负债率为81.68%</span></div>
<div class="dr" style="top:953.5px"><span style="left:16px">8</span><span class="o" style="left:77px">000652</span><span class="o" style="left:213px;font-size:21px">泰达股份</span><div class="sc" style="background:#eea55c">70</div><span style="left:435px">截止20210930,公司负债率为82.11%</span></div>
<div class="dr" style="top:991.0px"><span style="left:16px">9</span><span class="o" style="left:77px">000692</span><span class="o" style="left:213px;font-size:21px">惠天热电</span><div class="sc" style="background:#fa8484">57</div><span style="left:435px">截止20210930,公司负债率为96.77%</span></div>
<div class="dr" style="top:1028.5px"><span style="left:16px">10</span><span class="o" style="left:77px">000701</span><span class="o" style="left:213px;font-size:21px">厦门信达</span><div class="sc" style="background:#eea55c">60</div><span style="left:435px">截止20210930,公司负债率为86.89%</span></div>
<div class="dr" style="top:1066.0px"><span style="left:16px">11</span><span class="o" style="left:77px">000727</span><span class="o" style="left:213px;font-size:21px">冠捷科技</span><div class="sc" style="background:#eea55c">65</div><span style="left:435px">截止20210930,公司负债率为83.75%</span></div>
<div class="dr" style="top:1103.5px"><span style="left:16px">12</span><span class="o" style="left:77px">000732</span><span class="o" style="left:213px;font-size:21px">泰禾集团</span><div class="sc" style="background:#fa8484">17</div><span style="left:435px">截止20210930,公司负债率为91.82%</span></div>
<div class="dr" style="top:1141.0px"><span style="left:16px">13</span><span class="o" style="left:77px">000767</span><span class="o" style="left:213px;font-size:21px">晋控电力</span><div class="sc" style="background:#eea55c">60</div><span style="left:435px">截止20210930,公司负债率为84.97%</span></div>
<div class="dr" style="top:1178.5px"><span style="left:16px">14</span><span class="o" style="left:77px">000829</span><span class="o" style="left:213px;font-size:21px">天音控股</span><div class="sc" style="background:#eea55c">70</div><span style="left:435px">截止20210930,公司负债率为85.09%</span></div>
<div class="dr" style="top:1216.0px"><span style="left:16px">15</span><span class="o" style="left:77px">000868</span><span class="o" style="left:213px;font-size:21px">安凯客车</span><div class="sc" style="background:#eea55c">65</div><span style="left:435px">截止20210930,公司负债率为87.18%</span></div>
<div class="dr" style="top:1253.5px"><span style="left:16px">16</span><span class="o" style="left:77px">000890</span><span class="o" style="left:213px;font-size:21px">法尔胜</span><div class="sc" style="background:#fa8484">47</div><span style="left:435px">截止20210930,公司负债率为91.77%</span></div>
<div class="dr" style="top:1291.0px"><span style="left:16px">17</span><span class="o" style="left:77px">000906</span><span class="o" style="left:213px;font-size:21px">浙商中拓</span><div class="sc" style="background:#eea55c">70</div><span style="left:435px">截止20210930,公司负债率为83.99%</span></div>
<div class="b" style="left:1118px;top:653px;width:1px;height:680px;background:#dcdcdc;"></div>
<div class="b" style="left:1180px;top:653px;width:1px;height:680px;background:#dcdcdc;"></div>
<div class="b" style="left:1316px;top:653px;width:1px;height:680px;background:#dcdcdc;"></div>
<div class="b" style="left:1452px;top:653px;width:1px;height:680px;background:#dcdcdc;"></div>
<div class="b" style="left:1538px;top:653px;width:1px;height:680px;background:#dcdcdc;"></div>
<div class="b" style="left:2253px;top:653px;width:1px;height:680px;background:#dcdcdc;"></div>
</div></div>
<div class="b" style="left:2279px;top:460px;width:11px;height:255px;background:#dde3f6;border-radius:5px;"></div>
<div class="b" style="left:1092px;top:458px;width:1px;height:866px;background:#b4b4b4;"></div>
<div class="b" style="left:0;top:0;width:2517px;height:1450px;overflow:hidden;pointer-events:none;">
<div class="wm" style="left:2.0px;top:158.5px">www.cfchi.com</div>
<div class="wm" style="left:247.3px;top:158.5px">www.cfchi.com</div>
<div class="wm" style="left:492.6px;top:158.5px">www.cfchi.com</div>
<div class="wm" style="left:737.9px;top:158.5px">www.cfchi.com</div>
<div class="wm" style="left:983.2px;top:158.5px">www.cfchi.com</div>
<div class="wm" style="left:1228.5px;top:158.5px">www.cfchi.com</div>
<div class="wm" style="left:1473.8px;top:158.5px">www.cfchi.com</div>
<div class="wm" style="left:1719.1px;top:158.5px">www.cfchi.com</div>
<div class="wm" style="left:1964.4px;top:158.5px">www.cfchi.com</div>
<div class="wm" style="left:2209.7px;top:158.5px">www.cfchi.com</div>
<div class="wm" style="left:2455.0px;top:158.5px">www.cfchi.com</div>
<div class="wm" style="left:2700.3px;top:158.5px">www.cfchi.com</div>
<div class="wm" style="left:2.0px;top:336.6px">www.cfchi.com</div>
<div class="wm" style="left:247.3px;top:336.6px">www.cfchi.com</div>
<div class="wm" style="left:492.6px;top:336.6px">www.cfchi.com</div>
<div class="wm" style="left:737.9px;top:336.6px">www.cfchi.com</div>
<div class="wm" style="left:983.2px;top:336.6px">www.cfchi.com</div>
<div class="wm" style="left:1228.5px;top:336.6px">www.cfchi.com</div>
<div class="wm" style="left:1473.8px;top:336.6px">www.cfchi.com</div>
<div class="wm" style="left:1719.1px;top:336.6px">www.cfchi.com</div>
<div class="wm" style="left:1964.4px;top:336.6px">www.cfchi.com</div>
<div class="wm" style="left:2209.7px;top:336.6px">www.cfchi.com</div>
<div class="wm" style="left:2455.0px;top:336.6px">www.cfchi.com</div>
<div class="wm" style="left:2700.3px;top:336.6px">www.cfchi.com</div>
<div class="wm" style="left:2.0px;top:514.7px">www.cfchi.com</div>
<div class="wm" style="left:247.3px;top:514.7px">www.cfchi.com</div>
<div class="wm" style="left:492.6px;top:514.7px">www.cfchi.com</div>
<div class="wm" style="left:737.9px;top:514.7px">www.cfchi.com</div>
<div class="wm" style="left:983.2px;top:514.7px">www.cfchi.com</div>
<div class="wm" style="left:1228.5px;top:514.7px">www.cfchi.com</div>
<div class="wm" style="left:1473.8px;top:514.7px">www.cfchi.com</div>
<div class="wm" style="left:1719.1px;top:514.7px">www.cfchi.com</div>
<div class="wm" style="left:1964.4px;top:514.7px">www.cfchi.com</div>
<div class="wm" style="left:2209.7px;top:514.7px">www.cfchi.com</div>
<div class="wm" style="left:2455.0px;top:514.7px">www.cfchi.com</div>
<div class="wm" style="left:2700.3px;top:514.7px">www.cfchi.com</div>
<div class="wm" style="left:2.0px;top:692.8px">www.cfchi.com</div>
<div class="wm" style="left:247.3px;top:692.8px">www.cfchi.com</div>
<div class="wm" style="left:492.6px;top:692.8px">www.cfchi.com</div>
<div class="wm" style="left:737.9px;top:692.8px">www.cfchi.com</div>
<div class="wm" style="left:983.2px;top:692.8px">www.cfchi.com</div>
<div class="wm" style="left:1228.5px;top:692.8px">www.cfchi.com</div>
<div class="wm" style="left:1473.8px;top:692.8px">www.cfchi.com</div>
<div class="wm" style="left:1719.1px;top:692.8px">www.cfchi.com</div>
<div class="wm" style="left:1964.4px;top:692.8px">www.cfchi.com</div>
<div class="wm" style="left:2209.7px;top:692.8px">www.cfchi.com</div>
<div class="wm" style="left:2455.0px;top:692.8px">www.cfchi.com</div>
<div class="wm" style="left:2700.3px;top:692.8px">www.cfchi.com</div>
<div class="wm" style="left:2.0px;top:870.9px">www.cfchi.com</div>
<div class="wm" style="left:247.3px;top:870.9px">www.cfchi.com</div>
<div class="wm" style="left:492.6px;top:870.9px">www.cfchi.com</div>
<div class="wm" style="left:737.9px;top:870.9px">www.cfchi.com</div>
<div class="wm" style="left:983.2px;top:870.9px">www.cfchi.com</div>
<div class="wm" style="left:1228.5px;top:870.9px">www.cfchi.com</div>
<div class="wm" style="left:1473.8px;top:870.9px">www.cfchi.com</div>
<div class="wm" style="left:1719.1px;top:870.9px">www.cfchi.com</div>
<div class="wm" style="left:1964.4px;top:870.9px">www.cfchi.com</div>
<div class="wm" style="left:2209.7px;top:870.9px">www.cfchi.com</div>
<div class="wm" style="left:2455.0px;top:870.9px">www.cfchi.com</div>
<div class="wm" style="left:2700.3px;top:870.9px">www.cfchi.com</div>
<div class="wm" style="left:2.0px;top:1049.0px">www.cfchi.com</div>
<div class="wm" style="left:247.3px;top:1049.0px">www.cfchi.com</div>
<div class="wm" style="left:492.6px;top:1049.0px">www.cfchi.com</div>
<div class="wm" style="left:737.9px;top:1049.0px">www.cfchi.com</div>
<div class="wm" style="left:983.2px;top:1049.0px">www.cfchi.com</div>
<div class="wm" style="left:1228.5px;top:1049.0px">www.cfchi.com</div>
<div class="wm" style="left:1473.8px;top:1049.0px">www.cfchi.com</div>
<div class="wm" style="left:1719.1px;top:1049.0px">www.cfchi.com</div>
<div class="wm" style="left:1964.4px;top:1049.0px">www.cfchi.com</div>
<div class="wm" style="left:2209.7px;top:1049.0px">www.cfchi.com</div>
<div class="wm" style="left:2455.0px;top:1049.0px">www.cfchi.com</div>
<div class="wm" style="left:2700.3px;top:1049.0px">www.cfchi.com</div>
<div class="wm" style="left:2.0px;top:1227.1px">www.cfchi.com</div>
<div class="wm" style="left:247.3px;top:1227.1px">www.cfchi.com</div>
<div class="wm" style="left:492.6px;top:1227.1px">www.cfchi.com</div>
<div class="wm" style="left:737.9px;top:1227.1px">www.cfchi.com</div>
<div class="wm" style="left:983.2px;top:1227.1px">www.cfchi.com</div>
<div class="wm" style="left:1228.5px;top:1227.1px">www.cfchi.com</div>
<div class="wm" style="left:1473.8px;top:1227.1px">www.cfchi.com</div>
<div class="wm" style="left:1719.1px;top:1227.1px">www.cfchi.com</div>
<div class="wm" style="left:1964.4px;top:1227.1px">www.cfchi.com</div>
<div class="wm" style="left:2209.7px;top:1227.1px">www.cfchi.com</div>
<div class="wm" style="left:2455.0px;top:1227.1px">www.cfchi.com</div>
<div class="wm" style="left:2700.3px;top:1227.1px">www.cfchi.com</div>
<div class="wm" style="left:2.0px;top:1405.2px">www.cfchi.com</div>
<div class="wm" style="left:247.3px;top:1405.2px">www.cfchi.com</div>
<div class="wm" style="left:492.6px;top:1405.2px">www.cfchi.com</div>
<div class="wm" style="left:737.9px;top:1405.2px">www.cfchi.com</div>
<div class="wm" style="left:983.2px;top:1405.2px">www.cfchi.com</div>
<div class="wm" style="left:1228.5px;top:1405.2px">www.cfchi.com</div>
<div class="wm" style="left:1473.8px;top:1405.2px">www.cfchi.com</div>
<div class="wm" style="left:1719.1px;top:1405.2px">www.cfchi.com</div>
<div class="wm" style="left:1964.4px;top:1405.2px">www.cfchi.com</div>
<div class="wm" style="left:2209.7px;top:1405.2px">www.cfchi.com</div>
<div class="wm" style="left:2455.0px;top:1405.2px">www.cfchi.com</div>
<div class="wm" style="left:2700.3px;top:1405.2px">www.cfchi.com</div>
<div class="wm" style="left:2.0px;top:1583.3px">www.cfchi.com</div>
<div class="wm" style="left:247.3px;top:1583.3px">www.cfchi.com</div>
<div class="wm" style="left:492.6px;top:1583.3px">www.cfchi.com</div>
<div class="wm" style="left:737.9px;top:1583.3px">www.cfchi.com</div>
<div class="wm" style="left:983.2px;top:1583.3px">www.cfchi.com</div>
<div class="wm" style="left:1228.5px;top:1583.3px">www.cfchi.com</div>
<div class="wm" style="left:1473.8px;top:1583.3px">www.cfchi.com</div>
<div class="wm" style="left:1719.1px;top:1583.3px">www.cfchi.com</div>
<div class="wm" style="left:1964.4px;top:1583.3px">www.cfchi.com</div>
<div class="wm" style="left:2209.7px;top:1583.3px">www.cfchi.com</div>
<div class="wm" style="left:2455.0px;top:1583.3px">www.cfchi.com</div>
<div class="wm" style="left:2700.3px;top:1583.3px">www.cfchi.com</div>
<div class="wm" style="left:2.0px;top:1761.3999999999999px">www.cfchi.com</div>
<div class="wm" style="left:247.3px;top:1761.3999999999999px">www.cfchi.com</div>
<div class="wm" style="left:492.6px;top:1761.3999999999999px">www.cfchi.com</div>
<div class="wm" style="left:737.9px;top:1761.3999999999999px">www.cfchi.com</div>
<div class="wm" style="left:983.2px;top:1761.3999999999999px">www.cfchi.com</div>
<div class="wm" style="left:1228.5px;top:1761.3999999999999px">www.cfchi.com</div>
<div class="wm" style="left:1473.8px;top:1761.3999999999999px">www.cfchi.com</div>
<div class="wm" style="left:1719.1px;top:1761.3999999999999px">www.cfchi.com</div>
<div class="wm" style="left:1964.4px;top:1761.3999999999999px">www.cfchi.com</div>
<div class="wm" style="left:2209.7px;top:1761.3999999999999px">www.cfchi.com</div>
<div class="wm" style="left:2455.0px;top:1761.3999999999999px">www.cfchi.com</div>
<div class="wm" style="left:2700.3px;top:1761.3999999999999px">www.cfchi.com</div>
</div>
</body></html>
